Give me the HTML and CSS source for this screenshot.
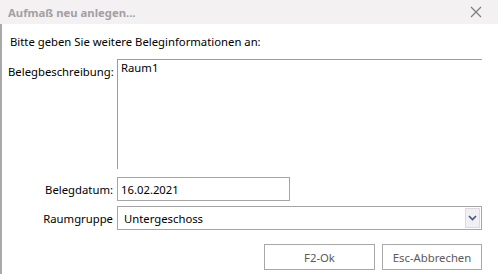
FILE: index.html
```
<!DOCTYPE html>
<html lang="de">
<head>
<meta charset="utf-8">
<title>Aufmaß neu anlegen...</title>
<link rel="stylesheet" href="styles.css">
</head>
<body>
<div class="dialog">
  <div class="titlebar">
    <span class="title">Aufmaß neu anlegen...</span>
    <svg class="close" width="12" height="12" viewBox="0 0 12 12"><path d="M1 1 L11 11 M11 1 L1 11" stroke="#808080" stroke-width="1.3" fill="none"/></svg>
  </div>
  <div class="content">
    <div class="intro">Bitte geben Sie weitere Beleginformationen an:</div>
    <div class="form">
      <div class="label label-top">Belegbeschreibung:</div>
      <div class="memo">Raum1</div>
      <div class="label">Belegdatum:</div>
      <div class="field field-date">16.02.2021</div>
      <div class="label">Raumgruppe</div>
      <div class="field field-combo">
        <span class="combo-text">Untergeschoss</span>
        <span class="combo-btn"><svg width="9" height="6" viewBox="0 0 9 6"><path d="M1 1 L4.5 4.5 L8 1" stroke="#3d5877" stroke-width="1.6" fill="none"/></svg></span>
      </div>
    </div>
    <div class="buttons">
      <div class="btn btn-ok">F2-Ok</div>
      <div class="btn btn-cancel">Esc-Abbrechen</div>
    </div>
  </div>
</div>
</body>
</html>
```
FILE: styles.css
```
html, body {
  margin: 0;
  padding: 0;
  background: #ffffff;
}
body {
  font-family: "Noto Sans", "Open Sans", sans-serif;
  font-size: 11.3px;
  color: #000;
}
.dialog {
  width: 498px;
  height: 274px;
  display: flex;
  flex-direction: column;
}
.titlebar {
  height: 24px;
  background: #f4f1f3;
  display: flex;
  align-items: center;
  justify-content: space-between;
  padding: 0 16px 0 8px;
  flex-shrink: 0;
}
.title {
  font-weight: bold;
  color: #a2a0a2;
  font-size: 11.3px;
}
.close {
  display: block;
}
.content {
  flex: 1;
  border-left: 2px solid #a9a9a9;
  padding: 0 16px 0 8px;
  display: flex;
  flex-direction: column;
}
.intro {
  margin-top: 9px;
  height: 17px;
  line-height: 17px;
}
.form {
  margin-top: 9px;
  display: grid;
  grid-template-columns: 103px 1fr;
  column-gap: 4px;
  row-gap: 5px;
  align-items: center;
}
.label {
  text-align: right;
  white-space: nowrap;
}
.label-top {
  align-self: start;
  margin-top: 5px;
  text-align: left;
  margin-left: -2px;
}
.memo {
  height: 110px;
  border-top: 1px solid #9c9c9c;
  border-left: 1px solid #9c9c9c;
  padding: 0 3px;
  box-sizing: border-box;
  margin-bottom: 3px;
}
.field {
  height: 24px;
  box-sizing: border-box;
  border: 1px solid #a5a5a5;
  display: flex;
  align-items: center;
  padding-left: 3px;
}
.field-date {
  width: 173px;
}
.field-combo {
  justify-content: space-between;
  padding-left: 6px;
  padding-right: 1px;
}
.combo-btn {
  width: 15px;
  height: 20px;
  background: #f1eff3;
  border: 1px solid #dcdae0;
  box-sizing: border-box;
  display: flex;
  align-items: center;
  justify-content: center;
}
.combo-btn svg {
  display: block;
}
.buttons {
  margin-top: 14px;
  display: flex;
  justify-content: flex-end;
  gap: 7px;
}
.btn {
  height: 26px;
  box-sizing: border-box;
  border: 1px solid #a8a8a8;
  display: flex;
  align-items: center;
  justify-content: center;
  color: #5a5a5a;
}
.btn-ok {
  width: 111px;
}
.btn-cancel {
  width: 100px;
}
```
